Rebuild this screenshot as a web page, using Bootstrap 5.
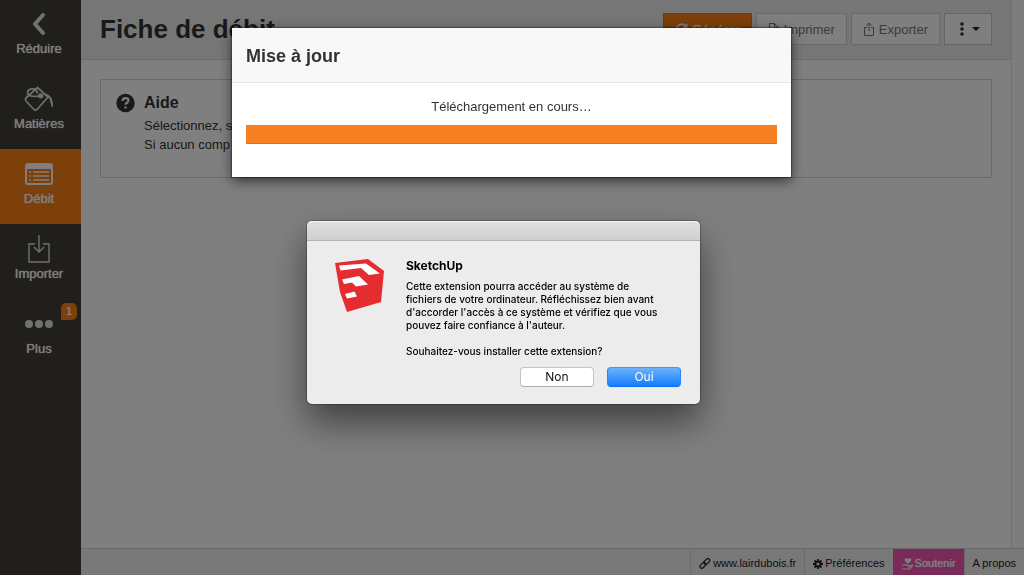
<!DOCTYPE html>
<html lang="fr">
<head>
<meta charset="utf-8">
<meta name="viewport" content="width=device-width, initial-scale=1">
<title>Fiche de débit</title>
<link href="https://cdn.jsdelivr.net/npm/bootstrap@5.3.0/dist/css/bootstrap.min.css" rel="stylesheet">
<style>
  body { font-family: "Liberation Sans", Arial, sans-serif; font-size: 13px; line-height: 19px; color: #333; background: #fff; }
  svg { display: block; flex: none; }

  /* left menu */
  .side-menu { width: 81px; background: #423f37; }
  .side-item { height: 75px; padding: 9px 3px 0 0; color: #fff; border: 0; background: none; text-decoration: none; text-shadow: 0 0 1px #fff; }
  .side-item:first-child { height: 74px; padding-top: 8px; }
  .side-item.active { background: #fa8014; }
  .side-icon { height: 31px; }
  .side-badge { top: 4px; right: 4px; width: 16px; height: 17px; font-size: 11px; line-height: 17px; border-radius: 5px 5px 5px 0; background: #fa8014; }

  /* page */
  .scroll-pane { margin-right: 12px; border-right: 1px solid #e4e4e4; }
  .right-gutter { background: #fafafa; }
  .page-head { background: #ededed; border-bottom: 1px solid #dadada; padding: 13px 19px 14px; }
  .page-head h1 { font-size: 26px; line-height: 32px; font-weight: 700; }
  .tool-btn { height: 32px; padding: 0 11px; font-size: 13px; line-height: 19px; border: 1px solid #ccc; border-radius: 0; background: #fff; color: #333; }
  .tool-btn.main-action { background: #fa8014; border-color: #ea7208; color: #fff; text-shadow: 0 0 1px #fff; }
  .tool-btn:disabled { color: #777; background: #fff; border-color: #d4d4d4; opacity: 1; }
  .tool-menu { padding: 0 11px 0 15px; }
  .help-box { margin: 19px; padding: 13px 15px 23px; border: 1px solid #d4d4d4; }
  .help-box h2 { font-size: 16px; line-height: 19px; font-weight: 700; margin-bottom: 4px; }
  .help-mark { margin-right: 9px; }

  .foot-bar { height: 27px; background: #f0f0f0; border-top: 1px solid #d2d2d2; font-size: 11px; }
  .foot-bar a { color: #222; text-decoration: none; gap: 2px; padding: 3px 8px 0; border-left: 1px solid #d6d6d6; }
  .foot-bar a.support { background: #f256b0; color: #fff; border-color: #f256b0; text-shadow: 0 0 1px #fff; }

  /* overlay and windows */
  .shade { background: rgba(0,0,0,.5); padding: 28px 1px 0 0; }
  .update-box { width: 559px; max-width: 100%; background: #fff; box-shadow: 0 4px 12px rgba(0,0,0,.6), 0 0 1px 1px rgba(0,0,0,.3); }
  .update-head { height: 55px; padding: 2px 14px 0; background: #f8f8f8; border-bottom: 1px solid #e5e5e5; }
  .update-head h2 { font-size: 18px; font-weight: 700; line-height: 24px; }
  .update-body { padding: 14px 14px 33px; }
  .update-bar { height: 19px; margin-top: 9px; border-radius: 0; }
  .update-bar .progress-bar { background: #f88022; border-bottom: 1px solid #e36e10; }

  .native-box { width: 393px; max-width: 100%; margin: 44px 16px 0 0; border-radius: 5px; background: #ececec; color: #000;
    font-family: Inter, Roboto, sans-serif; font-size: 10px; line-height: 13px; font-weight: 500;
    box-shadow: 0 0 1px 1px rgba(0,0,0,.25), 0 18px 36px rgba(0,0,0,.5); }
  .native-title { height: 20px; border-radius: 5px 5px 0 0; background: linear-gradient(#e0e0e0, #cfcfcf); border-bottom: 1px solid #b2b2b2; border-top: 1px solid #f4f4f4; }
  .native-body { padding: 18px 19px 17px 28px; }
  .native-text { padding-left: 21px; }
  .native-text h2 { font-size: 12px; line-height: 13px; font-weight: 700; margin-bottom: 8px; }
  .native-text p { margin-bottom: 13px; }
  .native-text p:last-child { margin-bottom: 9px; }
  .native-actions { gap: 13px; }
  .native-btn { width: 74px; height: 20px; border: 1px solid #c4c4c4; border-bottom-color: #ababab; border-radius: 4px; background: #fff; color: #111; font-size: 12px; line-height: 18px; padding: 0; }
  .native-btn.yes { color: #fff; border-color: #3f94f8 #2684fb #0a6ef5; background: linear-gradient(#6bb3fa, #167dfe); }
</style>
</head>
<body>
<div class="d-flex min-vh-100">
  <nav class="side-menu d-flex flex-column flex-shrink-0">
    <button type="button" class="side-item d-flex flex-column align-items-center">
      <span class="side-icon d-flex align-items-center"><svg width="16" height="24" viewBox="0 0 16 24"><path d="M12 3 4 12l8 9" fill="none" stroke="#e0e0e0" stroke-width="4" stroke-linecap="round" stroke-linejoin="round"/></svg></span>
      <span>Réduire</span>
    </button>
    <a href="#" class="side-item d-flex flex-column align-items-center">
      <span class="side-icon d-flex align-items-center"><svg width="30" height="26" viewBox="0 0 30 26" fill="none" stroke="#e0e0e0" stroke-width="1.700" stroke-linejoin="round" stroke-linecap="round"><path d="M13.500 1.500 24 11 13 23.500q-1.500 1.200-3 0L2 15q-1.200-1.500 0-3z"/><path d="M10 3Q3.500 2.500 3.500 7q.5 4.500 12 3"/><path d="M10 3q3 1 3.500 4"/><circle cx="16.800" cy="9.800" r="1.800" fill="#e0e0e0"/><path d="M20 8q9 0 8.500 13-1.500-3-2-7-1-2-2.500-3z" fill="#e0e0e0" stroke-width="1"/></svg></span>
      <span>Matières</span>
    </a>
    <a href="#" class="side-item active d-flex flex-column align-items-center">
      <span class="side-icon d-flex align-items-center"><svg width="28" height="22" viewBox="0 0 28 22"><path d="M3 0h22q3 0 3 3v16q0 3-3 3H3q-3 0-3-3V3q0-3 3-3zM2 6v13q0 1 1 1h22q1 0 1-1V6z" fill="#fff" fill-rule="evenodd"/><path d="M4 9h2M4 13h2M4 17h2M8 9h16M8 13h16M8 17h16" stroke="#fff" stroke-width="1.700"/></svg></span>
      <span>Débit</span>
    </a>
    <a href="#" class="side-item d-flex flex-column align-items-center">
      <span class="side-icon d-flex align-items-center"><svg width="22" height="28" viewBox="0 0 22 28" fill="none" stroke="#e0e0e0" stroke-width="1.400"><path d="M7 9H1v18h20V9h-6M11 0v16M6 12l5 5 5-5"/></svg></span>
      <span>Importer</span>
    </a>
    <a href="#" class="side-item position-relative d-flex flex-column align-items-center">
      <span class="side-icon d-flex align-items-center"><svg width="28" height="8" viewBox="0 0 28 8" fill="#e0e0e0"><circle cx="4" cy="4" r="4"/><circle cx="14" cy="4" r="4"/><circle cx="24" cy="4" r="4"/></svg></span>
      <span>Plus</span>
      <span class="side-badge position-absolute text-center">1</span>
    </a>
  </nav>

  <div class="d-flex flex-column flex-grow-1">
    <div class="right-gutter d-flex flex-column flex-grow-1">
      <main class="scroll-pane flex-grow-1 bg-white">
        <header class="page-head d-flex justify-content-between align-items-center">
          <h1 class="m-0">Fiche de débit</h1>
          <div class="d-flex gap-1">
            <button type="button" class="tool-btn main-action d-flex align-items-center gap-1"><svg width="13" height="13" viewBox="0 0 13 13"><path d="M11.500 7.500A5 5 0 1 1 10 2.500" fill="none" stroke="#fff" stroke-width="1.800"/><path d="M12.500 0v5h-5z" fill="#fff"/></svg>Générer</button>
            <button type="button" class="tool-btn d-flex align-items-center gap-1" disabled><svg width="12" height="14" viewBox="0 0 12 14"><path d="M1.500 1.500h5l4 4v7h-9zM6.500 1.500v4h4" fill="none" stroke="#777"/></svg>Imprimer</button>
            <button type="button" class="tool-btn d-flex align-items-center gap-1" disabled><svg width="12" height="14" viewBox="0 0 12 14"><path d="M4 5.500H1.500v8h9v-8H8M6 9V1M3.500 3.500 6 1l2.500 2.500" fill="none" stroke="#777"/></svg>Exporter</button>
            <button type="button" class="tool-btn tool-menu d-flex align-items-center justify-content-between gap-2" aria-label="Plus d'actions"><svg width="4" height="14" viewBox="0 0 4 14" fill="#333"><circle cx="2" cy="2" r="1.800"/><circle cx="2" cy="7" r="1.800"/><circle cx="2" cy="12" r="1.800"/></svg><svg width="8" height="4" viewBox="0 0 8 4"><path d="M0 0h8L4 4z" fill="#222"/></svg></button>
          </div>
        </header>
        <section class="help-box d-flex">
          <svg class="help-mark" width="19" height="20" viewBox="0 0 18 18"><circle cx="9" cy="9" r="8.700" fill="#333"/><path d="M6.200 7Q6.200 4.400 9 4.400t2.800 2.300Q11.800 8 10 9q-1 .6-1 1.700" fill="none" stroke="#fff" stroke-width="2"/><path d="M8 12.200h2v2H8z" fill="#fff"/></svg>
          <div>
            <h2>Aide</h2>
            <p class="m-0">Sélectionnez, s<br>Si aucun comp</p>
          </div>
        </section>
      </main>
    </div>
    <footer class="foot-bar d-flex justify-content-end">
      <a href="#" class="d-flex align-items-center"><svg width="12" height="11" viewBox="0 0 12 11" fill="none" stroke="#222" stroke-width="1.200"><rect x="-3.300" y="-1.800" width="6.600" height="3.600" rx="1.800" transform="translate(7.800 3.500) rotate(-45)"/><rect x="-3.300" y="-1.800" width="6.600" height="3.600" rx="1.800" transform="translate(3.900 7.400) rotate(-45)"/></svg>www.lairdubois.fr</a>
      <a href="#" class="d-flex align-items-center"><svg width="10" height="10" viewBox="0 0 10 10"><circle cx="5" cy="5" r="2.600" fill="none" stroke="#222" stroke-width="2"/><path d="M5 0v2M5 8v2M0 5h2M8 5h2M1.500 1.500l1.400 1.400M7.100 7.100l1.400 1.400M8.500 1.500 7.100 2.900M2.900 7.100 1.500 8.500" stroke="#222" stroke-width="1.800"/></svg>Préférences</a>
      <a href="#" class="support d-flex align-items-center"><svg width="11" height="12" viewBox="0 0 11 12"><path d="M6 6 2.800 2.800Q2 .5 4 .3 5.500.2 6 1.500 6.500.2 8 .3q2 .2 1.200 2.500z" fill="#fff"/><path d="M0 7h2q2-1 3 .5h2q1 1-1 1.500h1l3-2q1 0 .5 1L8 11H0" fill="none" stroke="#fff" stroke-width="1.200"/></svg>Soutenir</a>
      <a href="#" class="d-flex align-items-center">A propos</a>
    </footer>
  </div>
</div>

<div class="shade position-fixed top-0 start-0 w-100 h-100 d-flex flex-column align-items-center">
  <section class="update-box" role="dialog" aria-labelledby="updateTitle">
    <div class="update-head d-flex align-items-center"><h2 id="updateTitle" class="m-0">Mise à jour</h2></div>
    <div class="update-body">
      <p class="text-center m-0">Téléchargement en cours…</p>
      <div class="progress update-bar" role="progressbar" aria-label="Téléchargement" aria-valuenow="100" aria-valuemin="0" aria-valuemax="100"><div class="progress-bar w-100"></div></div>
    </div>
  </section>

  <section class="native-box" role="alertdialog" aria-labelledby="nativeTitle">
    <div class="native-title"></div>
    <div class="native-body">
      <div class="d-flex">
        <svg width="50" height="53" viewBox="0 0 50 53"><path d="M0 4 33 0 49 12 46 43 12 53 5 33z" fill="#e42c31"/><path d="M4 6.500 31 4.500 45 14.500 34 16 26 9 5.500 11.500zM7 20.500 24 17 33 25.500 21 27.500 17 23.500 9 25zM10 35 19.500 32.500 22 37.500 12 39.500z" fill="#fff"/></svg>
        <div class="native-text">
          <h2 id="nativeTitle">SketchUp</h2>
          <p>Cette extension pourra accéder au système de<br>fichiers de votre ordinateur. Réfléchissez bien avant<br>d'accorder l'accès à ce système et vérifiez que vous<br>pouvez faire confiance à l'auteur.</p>
          <p>Souhaitez-vous installer cette extension?</p>
        </div>
      </div>
      <div class="native-actions d-flex justify-content-end">
        <button type="button" class="native-btn">Non</button>
        <button type="button" class="native-btn yes">Oui</button>
      </div>
    </div>
  </section>
</div>
<script src="https://cdn.jsdelivr.net/npm/bootstrap@5.3.0/dist/js/bootstrap.bundle.min.js"></script>
</body>
</html>
